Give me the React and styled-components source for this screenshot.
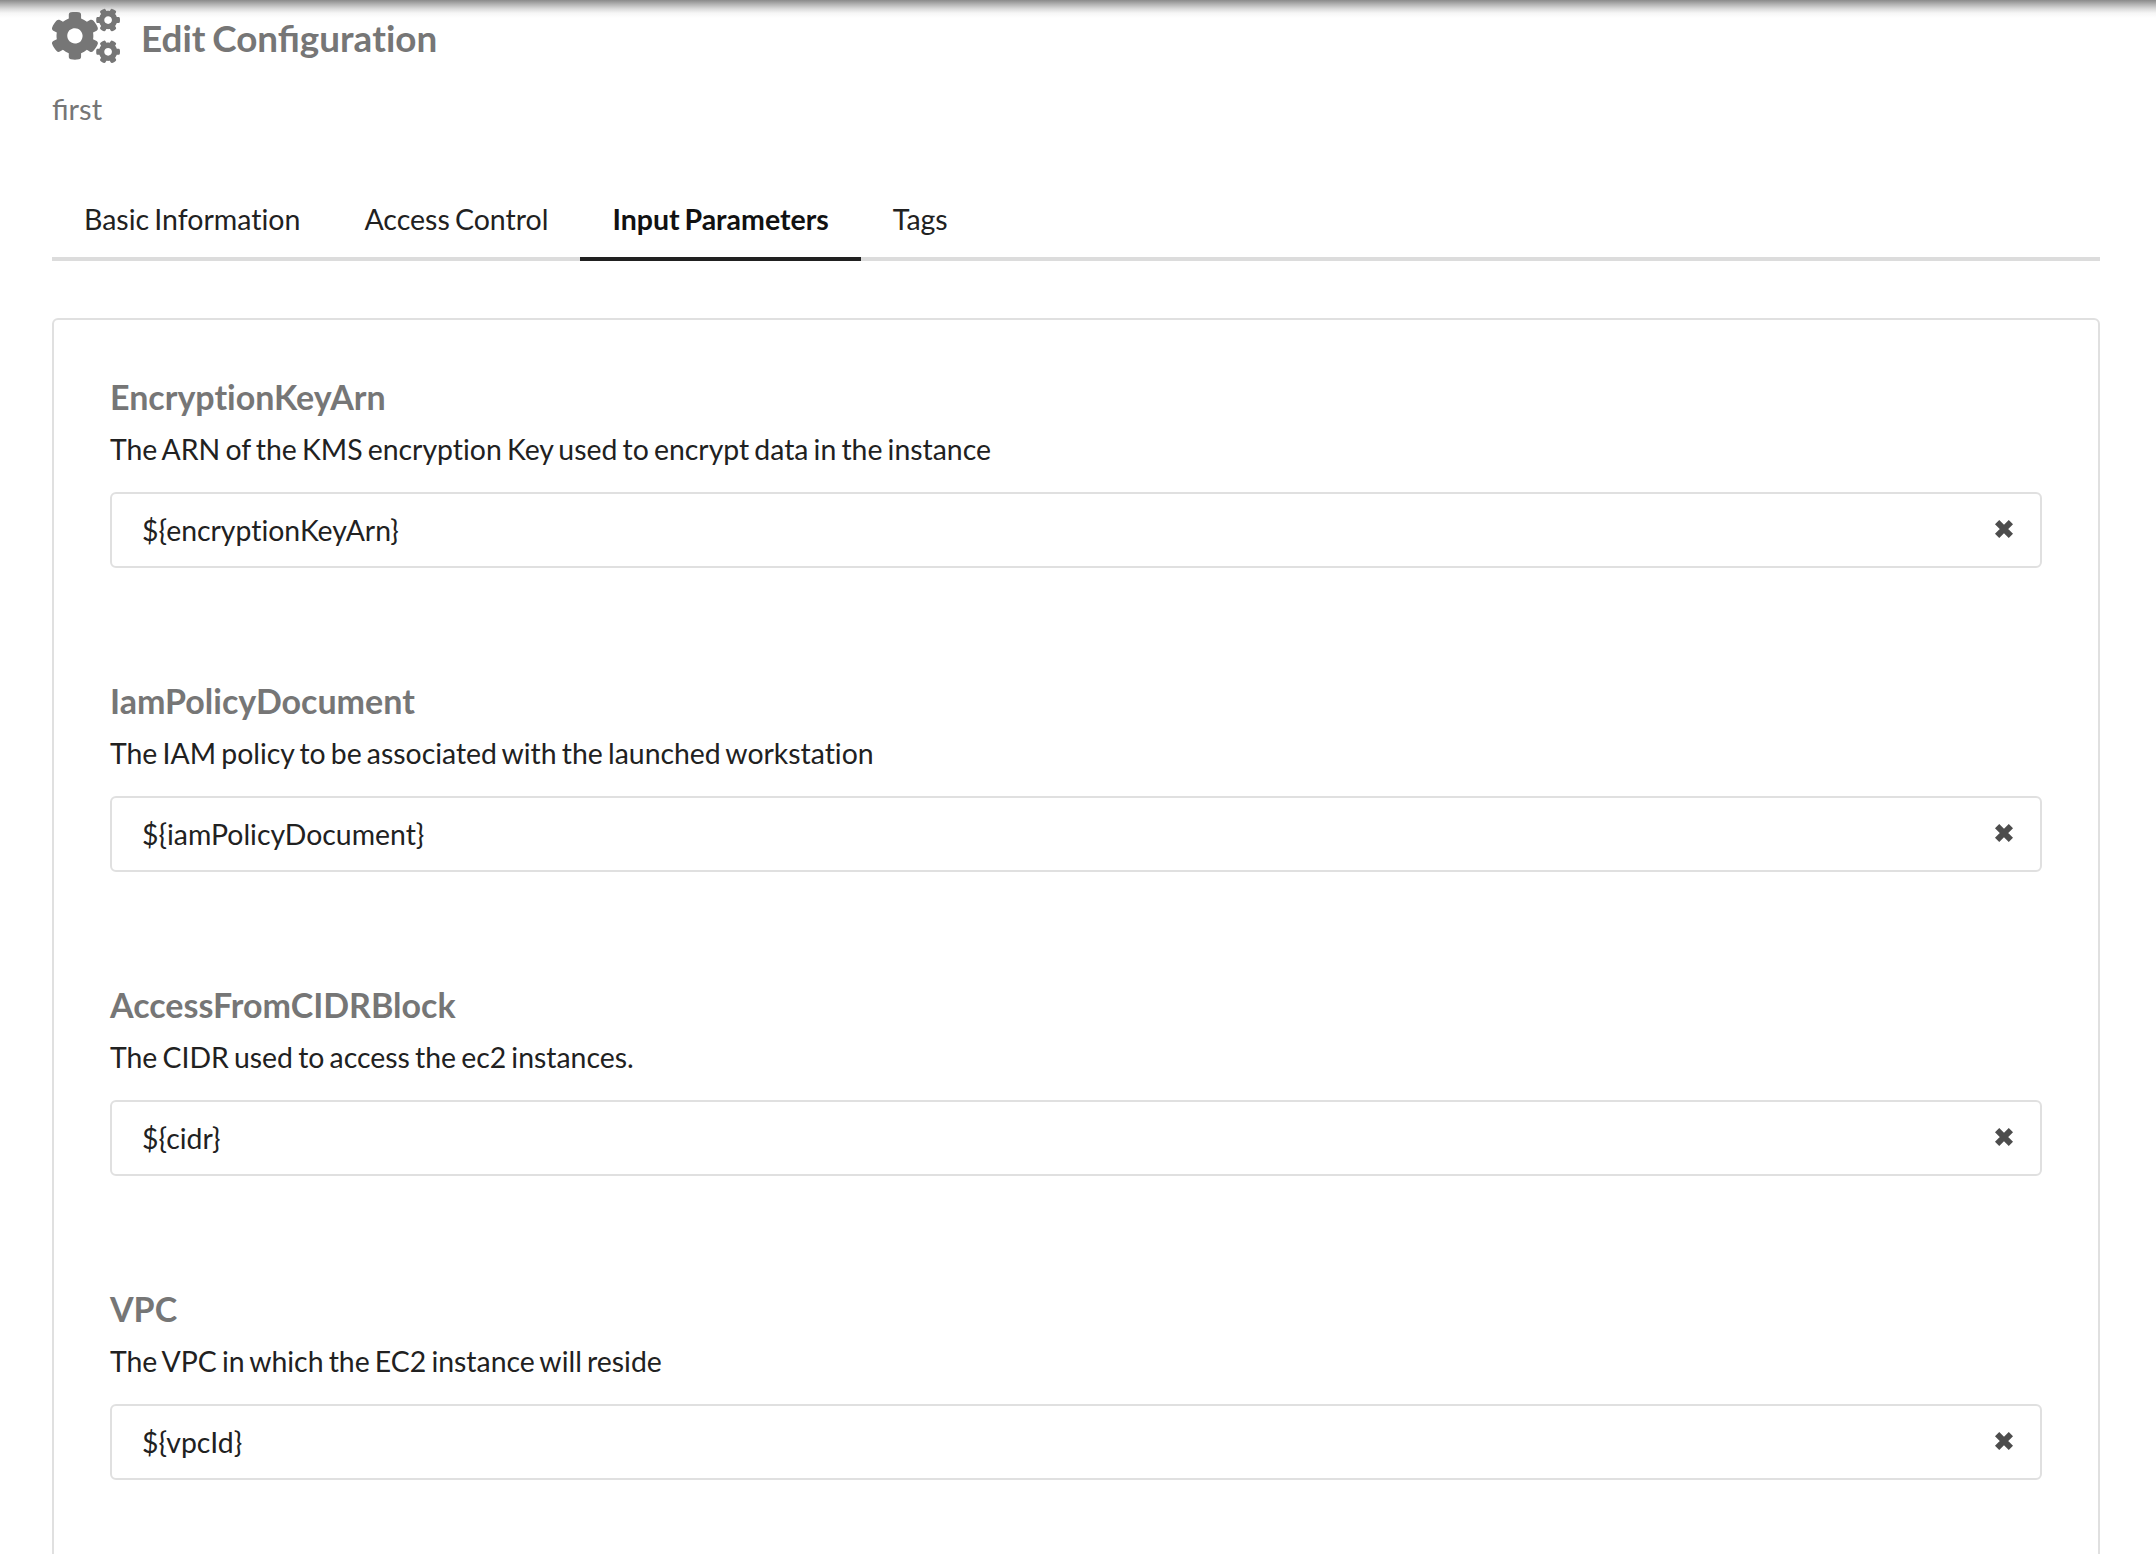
import styled, { createGlobalStyle } from "styled-components";
import { FaCogs } from "react-icons/fa";

const GlobalStyle = createGlobalStyle`
  html, body {
    margin: 0;
    padding: 0;
    background: #fff;
  }
  body {
    font-family: Lato, "Open Sans", sans-serif;
    color: #212121;
    word-spacing: -2.1px;
  }
`;

const Page = styled.div`
  height: 1554px;
  overflow: hidden;
`;

const TopShadow = styled.div`
  height: 18px;
  margin-bottom: -18px;
  background: linear-gradient(to bottom, #8a8a8a 0, #b0b0b0 4px, #dcdcdc 9px, #f6f6f6 13px, #fff 18px);
`;

const Content = styled.div`
  padding: 0 56px 0 52px;
  position: relative;
`;

const Header = styled.div`
  display: flex;
  align-items: center;
  gap: 21px;
  height: 76px;
  color: #767676;
`;

const HeaderIcon = styled(FaCogs)`
  width: 68px;
  height: 68px;
  margin-bottom: 5px;
`;

const Title = styled.h1`
  margin: 0;
  font-size: 36.8px;
  font-weight: 700;
  line-height: 76px;
  color: #767676;
`;

const NoLigature = styled.span`
  font-variant-ligatures: none;
`;

const Subtitle = styled.div`
  font-size: 29px;
  line-height: 36px;
  margin-top: 15px;
  color: #767676;
`;

const Tabs = styled.div`
  display: flex;
  margin-top: 63px;
  border-bottom: 4px solid #dcdcdc;
`;

const Tab = styled.div`
  padding: 0 32px;
  height: 67px;
  line-height: 58px;
  font-size: 28.5px;
  font-variant-ligatures: none;
  font-weight: ${(props) => (props.$active ? 700 : 400)};
  color: ${(props) => (props.$active ? "#111" : "#212121")};
  margin-bottom: -4px;
  border-bottom: 4px solid ${(props) => (props.$active ? "#212121" : "transparent")};
`;

const Card = styled.div`
  margin-top: 57px;
  height: 1400px;
  border: 2px solid #e0e0e0;
  border-radius: 6px;
  padding: 53px 56px 0;
  display: flex;
  flex-direction: column;
  gap: 109px;
`;

const Field = styled.div`
  display: flex;
  flex-direction: column;
`;

const Label = styled.div`
  font-size: 34px;
  font-weight: 700;
  line-height: 48px;
  font-variant-ligatures: none;
  color: #767676;
`;

const Description = styled.div`
  font-size: 28.4px;
  line-height: 40px;
  margin-top: 8px;
  font-variant-ligatures: none;
  color: #212121;
`;

const InputBox = styled.div`
  margin-top: 23px;
  height: 76px;
  box-sizing: border-box;
  border: 2px solid #e0e0e0;
  border-radius: 6px;
  padding: 0 26px 0 30px;
  display: flex;
  align-items: center;
  justify-content: space-between;
  font-size: 28.4px;
  font-variant-ligatures: none;
  color: #212121;
`;

const ClearSvg = styled.svg`
  width: 20px;
  height: 20px;
  margin-bottom: 2px;
  color: #4d4d4d;
`;

function ClearIcon() {
  return (
    <ClearSvg viewBox="0 0 18 18">
      <path d="M2.8 2.8 L15.2 15.2 M15.2 2.8 L2.8 15.2" stroke="currentColor" strokeWidth="5.4" fill="none" />
    </ClearSvg>
  );
}

const fields = [
  {
    name: "EncryptionKeyArn",
    text: "The ARN of the KMS encryption Key used to encrypt data in the instance",
    value: "${encryptionKeyArn}",
  },
  {
    name: "IamPolicyDocument",
    text: "The IAM policy to be associated with the launched workstation",
    value: "${iamPolicyDocument}",
  },
  {
    name: "AccessFromCIDRBlock",
    text: "The CIDR used to access the ec2 instances.",
    value: "${cidr}",
  },
  {
    name: "VPC",
    text: "The VPC in which the EC2 instance will reside",
    value: "${vpcId}",
  },
];

export default function App() {
  return (
    <>
      <GlobalStyle />
      <Page>
        <TopShadow />
        <Content>
          <Header>
            <HeaderIcon />
            <Title>
              Edit Configura<NoLigature>tion</NoLigature>
            </Title>
          </Header>
          <Subtitle>first</Subtitle>
          <Tabs>
            <Tab>Basic Information</Tab>
            <Tab>Access Control</Tab>
            <Tab $active>Input Parameters</Tab>
            <Tab>Tags</Tab>
          </Tabs>
          <Card>
            {fields.map((field) => (
              <Field key={field.name}>
                <Label>{field.name}</Label>
                <Description>{field.text}</Description>
                <InputBox>
                  <span>{field.value}</span>
                  <ClearIcon />
                </InputBox>
              </Field>
            ))}
          </Card>
        </Content>
      </Page>
    </>
  );
}
